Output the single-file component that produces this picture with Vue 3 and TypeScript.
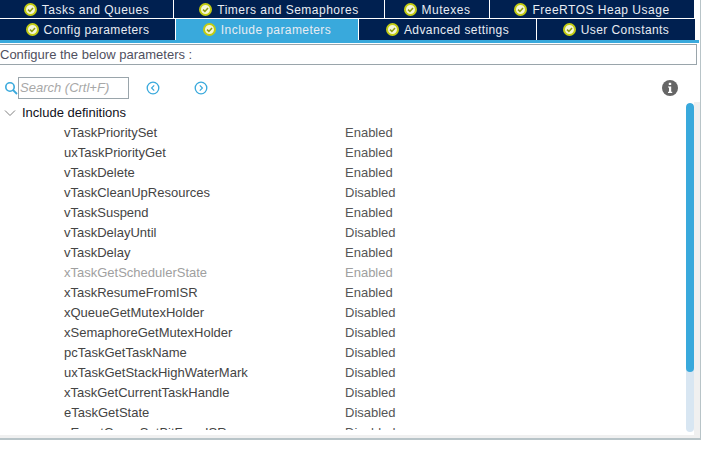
<script setup lang="ts">
interface Tab { label: string; active?: boolean }
const topTabs: Tab[] = [
  { label: 'Tasks and Queues' },
  { label: 'Timers and Semaphores' },
  { label: 'Mutexes' },
  { label: 'FreeRTOS Heap Usage' },
]
const bottomTabs: Tab[] = [
  { label: 'Config parameters' },
  { label: 'Include parameters', active: true },
  { label: 'Advanced settings' },
  { label: 'User Constants' },
]
const rows: { name: string; value: string; off?: boolean }[] = [
  { name: 'vTaskPrioritySet', value: 'Enabled' },
  { name: 'uxTaskPriorityGet', value: 'Enabled' },
  { name: 'vTaskDelete', value: 'Enabled' },
  { name: 'vTaskCleanUpResources', value: 'Disabled' },
  { name: 'vTaskSuspend', value: 'Enabled' },
  { name: 'vTaskDelayUntil', value: 'Disabled' },
  { name: 'vTaskDelay', value: 'Enabled' },
  { name: 'xTaskGetSchedulerState', value: 'Enabled', off: true },
  { name: 'xTaskResumeFromISR', value: 'Enabled' },
  { name: 'xQueueGetMutexHolder', value: 'Disabled' },
  { name: 'xSemaphoreGetMutexHolder', value: 'Disabled' },
  { name: 'pcTaskGetTaskName', value: 'Disabled' },
  { name: 'uxTaskGetStackHighWaterMark', value: 'Disabled' },
  { name: 'xTaskGetCurrentTaskHandle', value: 'Disabled' },
  { name: 'eTaskGetState', value: 'Disabled' },
  { name: 'xEventGroupSetBitFromISR', value: 'Disabled' },
]
</script>

<template>
  <div class="frame">
    <div class="panel">
      <div class="tabs top">
        <div v-for="t in topTabs" :key="t.label" class="tab">
          <svg class="check" width="13" height="13" viewBox="0 0 13 13">
            <circle cx="6.5" cy="6.5" r="5.5" fill="#f4f6d8" stroke="#c3cc12" stroke-width="2" />
            <path d="M4 6.6 L5.9 8.4 L9 4.9" fill="none" stroke="#8f9a10" stroke-width="1.5" />
          </svg>
          <span>{{ t.label }}</span>
        </div>
      </div>
      <div class="tabs bottom">
        <div v-for="t in bottomTabs" :key="t.label" class="tab" :class="{ active: t.active }">
          <svg class="check" width="13" height="13" viewBox="0 0 13 13">
            <circle cx="6.5" cy="6.5" r="5.5" fill="#f4f6d8" stroke="#c3cc12" stroke-width="2" />
            <path d="M4 6.6 L5.9 8.4 L9 4.9" fill="none" stroke="#8f9a10" stroke-width="1.5" />
          </svg>
          <span>{{ t.label }}</span>
        </div>
      </div>
      <div class="rule"></div>
      <div class="caption">Configure the below parameters :</div>

      <div class="toolbar">
        <svg class="search-icon" width="14" height="14" viewBox="0 0 14 14">
          <circle cx="6" cy="6" r="4.2" fill="none" stroke="#39a9dc" stroke-width="1.6" />
          <path d="M9 9 L13 13" stroke="#39a9dc" stroke-width="1.8" />
        </svg>
        <div class="search">Search (Crtl+F)</div>
        <svg class="nav first" width="14" height="14" viewBox="0 0 14 14">
          <circle cx="7" cy="7" r="5.8" fill="none" stroke="#39a9dc" stroke-width="1.3" />
          <path d="M8.2 4.4 L5.6 7 L8.2 9.6" fill="none" stroke="#39a9dc" stroke-width="1.2" />
        </svg>
        <svg class="nav" width="14" height="14" viewBox="0 0 14 14">
          <circle cx="7" cy="7" r="5.8" fill="none" stroke="#39a9dc" stroke-width="1.3" />
          <path d="M5.8 4.4 L8.4 7 L5.8 9.6" fill="none" stroke="#39a9dc" stroke-width="1.2" />
        </svg>
        <svg class="info" width="16" height="16" viewBox="0 0 16 16">
          <circle cx="8" cy="8" r="8" fill="#666" />
          <rect x="6.8" y="2.8" width="2.4" height="2.2" fill="#fff" />
          <path d="M6 6.4 H9.2 V11.8 H10.2 V13 H6 V11.8 H7 V7.6 H6 Z" fill="#fff" />
        </svg>
      </div>

      <div class="content">
        <div class="tree">
          <div class="group">
            <svg width="12" height="8" viewBox="0 0 12 8">
              <path d="M1 1.5 L6 6.5 L11 1.5" fill="none" stroke="#808080" stroke-width="1" />
            </svg>
            <span>Include definitions</span>
          </div>
          <div v-for="r in rows" :key="r.name" class="row" :class="{ off: r.off }">
            <span class="name">{{ r.name }}</span>
            <span class="value">{{ r.value }}</span>
          </div>
        </div>
        <div class="track"><div class="thumb"></div></div>
      </div>
    </div>
  </div>
</template>

<style>
html, body { margin: 0; background: #fff; }
</style>

<style scoped>
.frame {
  width: 701px;
  height: 450px;
  background: #fff;
  font-family: "Liberation Sans", Arial, sans-serif;
  font-size: 13px;
  overflow: hidden;
}
.panel {
  box-sizing: border-box;
  width: 701px;
  height: 440px;
  background: #fff;
  border-right: 1px solid #b8c4c8;
  border-bottom: 2px solid #b8c4c8;
  display: flex;
  flex-direction: column;
}
.tabs {
  display: grid;
  width: 694px;
  column-gap: 1px;
  background: #fff;
}
.top {
  grid-template-columns: 173px 210px 104px 204px;
  height: 18px;
  margin-bottom: 1px;
}
.bottom {
  grid-template-columns: 175px 182px 177px 158px;
  height: 21px;
}
.tab {
  display: flex;
  align-items: center;
  justify-content: center;
  gap: 5px;
  background: #002050;
  color: #e8ecf2;
  font-size: 12px;
  letter-spacing: 0.5px;
  white-space: nowrap;
}
.bottom .tab { letter-spacing: 0.42px; }
.top .tab span { position: relative; top: 1px; }
.tab.active { background: #39a9dc; }
.check { flex: none; }
.rule {
  height: 3px;
  width: 699px;
  background: #39a9dc;
  flex: none;
}
.caption {
  box-sizing: border-box;
  flex: none;
  width: 697px;
  height: 21px;
  margin-top: 1px;
  border: 1px solid #9aa5ab;
  border-left: 0;
  line-height: 19px;
  color: #505060;
}
.toolbar {
  flex: none;
  height: 22px;
  margin-top: 12px;
  display: flex;
  align-items: center;
  padding-left: 4px;
}
.search {
  box-sizing: border-box;
  width: 111px;
  height: 22px;
  border: 1px solid #9aa5ab;
  padding-left: 1px;
  line-height: 20px;
  font-style: italic;
  color: #a8a8a8;
  white-space: nowrap;
  overflow: hidden;
}
.nav.first { margin-left: 17px; }
.nav + .nav { margin-left: 34px; }
.info { margin-left: auto; margin-right: 22px; }
.content {
  flex: 1;
  min-height: 0;
  display: flex;
  padding-right: 6px;
  padding-bottom: 3px;
  background: #fff;
  box-shadow: inset 0 -3px 0 #f0f0f0, inset -6px 0 0 #f0f0f0;
  margin-top: 3px;
}
.tree {
  flex: 1;
  min-width: 0;
  height: 328px;
  overflow: hidden;
}
.group {
  height: 21px;
  display: flex;
  align-items: center;
  gap: 6px;
  padding-left: 4px;
  color: #101020;
}
.row {
  height: 20px;
  line-height: 20px;
  display: flex;
  color: #444;
}
.name { width: 281px; margin-left: 64px; flex: none; }
.value { color: #555; }
.row.off, .row.off .value { color: #a0a0a0; }
.track {
  flex: none;
  width: 8px;
  height: 329px;
  margin-top: 1px;
  background: #d8e6f2;
  border-radius: 4px;
  overflow: hidden;
}
.thumb {
  height: 269px;
  background: #39a9dc;
  border-radius: 4px;
}
</style>
